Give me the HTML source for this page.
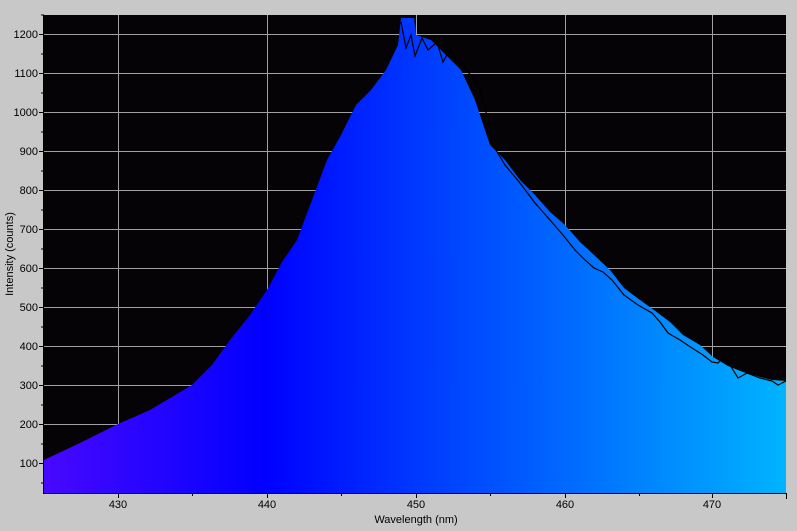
<!DOCTYPE html>
<html><head><style>
body{margin:0;width:797px;height:531px;background:#c9c8c9;overflow:hidden;font-family:"Liberation Sans",sans-serif}
</style></head><body>
<svg width="797" height="531" xmlns="http://www.w3.org/2000/svg" style="position:absolute;left:0;top:0">
<defs>
<linearGradient id="g" x1="44" x2="786" y1="0" y2="0" gradientUnits="userSpaceOnUse">
<stop offset="0" stop-color="#4808ff"/>
<stop offset="0.3" stop-color="#0000ff"/>
<stop offset="0.5" stop-color="#0038ff"/>
<stop offset="0.7" stop-color="#0068ff"/>
<stop offset="1" stop-color="#00b4ff"/>
</linearGradient>
</defs>
<rect x="44" y="15" width="742" height="478" fill="#050305"/>
<g stroke="#a0a0a0" stroke-width="1">
<line x1="118.5" y1="15" x2="118.5" y2="493"/>
<line x1="267.5" y1="15" x2="267.5" y2="493"/>
<line x1="416.5" y1="15" x2="416.5" y2="493"/>
<line x1="565.5" y1="15" x2="565.5" y2="493"/>
<line x1="712.5" y1="15" x2="712.5" y2="493"/>
<line x1="44" y1="34.5" x2="786" y2="34.5"/>
<line x1="44" y1="73.5" x2="786" y2="73.5"/>
<line x1="44" y1="112.5" x2="786" y2="112.5"/>
<line x1="44" y1="151.5" x2="786" y2="151.5"/>
<line x1="44" y1="190.5" x2="786" y2="190.5"/>
<line x1="44" y1="229.5" x2="786" y2="229.5"/>
<line x1="44" y1="268.5" x2="786" y2="268.5"/>
<line x1="44" y1="307.5" x2="786" y2="307.5"/>
<line x1="44" y1="346.5" x2="786" y2="346.5"/>
<line x1="44" y1="385.5" x2="786" y2="385.5"/>
<line x1="44" y1="424.5" x2="786" y2="424.5"/>
<line x1="44" y1="463.5" x2="786" y2="463.5"/>
</g>
<polygon fill="url(#g)" points="44,460 80,443 118,424 150,410 192,385 212,365 230,340 250,315 267,290 282,262 297,240 312,200 327,160 341,135 356,105 371,90 386,70 398,45 401,18 414,18 416,35 431,40 446,55 461,70 475,100 490,145 505,160 520,180 535,195 550,212 565,225 580,242 594,255 610,270 624,288 640,300 654,310 670,322 683,335 700,345 713,357 728,366 743,372 760,377 772,380 786,381 786,493 44,493"/>
<polyline fill="none" stroke="#000" stroke-width="1.2" points="401,22 406,48 411,35 415,56 422,38 428,50 437,42 443,62 450,49 456,60 462,63 468,72 473,78 478,85 481,92 488,120 493,145 505,165 520,183 535,203 550,220 563,235 575,250 585,260 594,268 603,272 612,280 624,295 638,305 652,313 660,322 668,333 680,340 692,348 703,355 712,362 718,363 724,357 730,365 738,378 747,373 760,378 772,381 778,385 786,381"/>
<g stroke="#000" stroke-width="1">
<line x1="43.5" y1="15" x2="43.5" y2="494"/>
<line x1="43" y1="493.5" x2="787" y2="493.5"/>
<line x1="786.5" y1="493" x2="786.5" y2="499"/>
</g>
<g stroke="#000">
<line x1="39" y1="34.5" x2="44" y2="34.5"/><line x1="39" y1="73.5" x2="44" y2="73.5"/><line x1="39" y1="112.5" x2="44" y2="112.5"/><line x1="39" y1="151.5" x2="44" y2="151.5"/><line x1="39" y1="190.5" x2="44" y2="190.5"/><line x1="39" y1="229.5" x2="44" y2="229.5"/><line x1="39" y1="268.5" x2="44" y2="268.5"/><line x1="39" y1="307.5" x2="44" y2="307.5"/><line x1="39" y1="346.5" x2="44" y2="346.5"/><line x1="39" y1="385.5" x2="44" y2="385.5"/><line x1="39" y1="424.5" x2="44" y2="424.5"/><line x1="39" y1="463.5" x2="44" y2="463.5"/>
<line x1="41" y1="54" x2="44" y2="54"/><line x1="41" y1="93" x2="44" y2="93"/><line x1="41" y1="132" x2="44" y2="132"/><line x1="41" y1="171" x2="44" y2="171"/><line x1="41" y1="210" x2="44" y2="210"/><line x1="41" y1="249" x2="44" y2="249"/><line x1="41" y1="288" x2="44" y2="288"/><line x1="41" y1="327" x2="44" y2="327"/><line x1="41" y1="366" x2="44" y2="366"/><line x1="41" y1="405" x2="44" y2="405"/><line x1="41" y1="444" x2="44" y2="444"/><line x1="41" y1="483" x2="44" y2="483"/><line x1="41" y1="15" x2="44" y2="15"/>
<line x1="118.5" y1="493" x2="118.5" y2="498"/><line x1="267.5" y1="493" x2="267.5" y2="498"/><line x1="416.5" y1="493" x2="416.5" y2="498"/><line x1="565.5" y1="493" x2="565.5" y2="498"/><line x1="712.5" y1="493" x2="712.5" y2="498"/>
<line x1="192.5" y1="493" x2="192.5" y2="496"/><line x1="341.5" y1="493" x2="341.5" y2="496"/><line x1="490.5" y1="493" x2="490.5" y2="496"/><line x1="639.5" y1="493" x2="639.5" y2="496"/>
</g>
<g font-size="11" fill="#000" text-anchor="end">
<text x="38" y="38">1200</text><text x="38" y="77">1100</text><text x="38" y="116">1000</text><text x="38" y="155">900</text><text x="38" y="194">800</text><text x="38" y="233">700</text><text x="38" y="272">600</text><text x="38" y="311">500</text><text x="38" y="350">400</text><text x="38" y="389">300</text><text x="38" y="428">200</text><text x="38" y="467">100</text>
</g>
<g font-size="11" fill="#000" text-anchor="middle">
<text x="118" y="508">430</text><text x="267" y="508">440</text><text x="416" y="508">450</text><text x="565" y="508">460</text><text x="712" y="508">470</text>
<text x="416" y="523">Wavelength (nm)</text>
<text x="0" y="0" transform="translate(13,254) rotate(-90)">Intensity (counts)</text>
</g>
</svg>
</body></html>
